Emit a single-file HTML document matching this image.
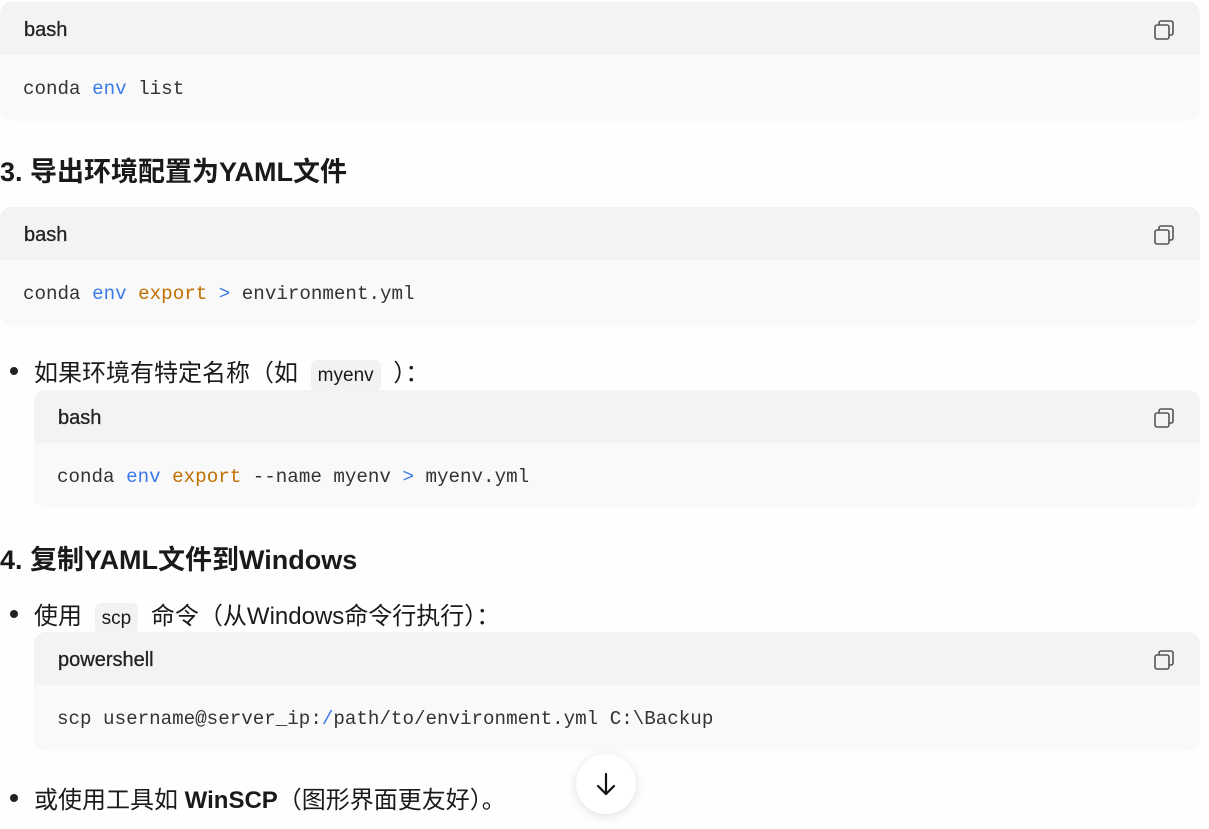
<!DOCTYPE html><html><head><meta charset="utf-8"><style>
body{margin:0;width:1209px;height:829px;background:#fefefe;position:relative;overflow:hidden;font-family:"Liberation Sans","Noto Sans CJK SC",sans-serif;color:#1a1a1a}
.blk{position:absolute;right:9px;border-radius:12px;background:#f9f9f9;overflow:hidden}
.hd{height:53px;background:#f3f3f3;position:relative}
.hd span{position:absolute;left:24px;top:17px;font-size:20px;color:#222;-webkit-text-stroke:0.3px #222}
.hd svg{position:absolute;right:25px;top:18px}
.cd{position:absolute;left:23px;font-family:"Liberation Mono",monospace;font-size:19.2px;color:#333;white-space:pre}
.b{color:#3b7ae8}.o{color:#c07000}
h3{position:absolute;left:0;margin:0;font-size:27px;font-weight:bold}
.li{position:absolute;left:10px;font-size:24px;white-space:pre}
.li:before{content:"";position:absolute;left:0;top:14px;width:8px;height:8px;border-radius:50%;background:#222}
.li span.t{margin-left:24px}
.ic{background:#f2f2f2;border-radius:6px;padding:5px 7px;font-size:19px;margin:0 6px}
</style></head><body>
<svg width="0" height="0" style="position:absolute"><defs><g id="cp"><rect x="1" y="5" width="14" height="14" rx="2" fill="none" stroke="#555" stroke-width="1.6"/><path d="M5 5V3a2 2 0 0 1 2-2h10a2 2 0 0 1 2 2v10a2 2 0 0 1-2 2h-2" fill="none" stroke="#555" stroke-width="1.6"/></g></defs></svg>
<div class="blk" style="left:0;top:2px;height:119px"><div class="hd"><span>bash</span><svg width="21" height="21"><use href="#cp"/></svg></div><div class="cd" style="top:76px">conda <span class="b">env</span> list</div></div>
<h3 style="top:150px">3. 导出环境配置为YAML文件</h3>
<div class="blk" style="left:0;top:207px;height:118px"><div class="hd"><span>bash</span><svg width="21" height="21"><use href="#cp"/></svg></div><div class="cd" style="top:76px">conda <span class="b">env</span> <span class="o">export</span> <span class="b">&gt;</span> environment.yml</div></div>
<div class="li" style="top:353px"><span class="t">如果环境有特定名称（如 <span class="ic">myenv</span> ）：</span></div>
<div class="blk" style="left:34px;top:390px;height:118px"><div class="hd"><span>bash</span><svg width="21" height="21"><use href="#cp"/></svg></div><div class="cd" style="top:76px">conda <span class="b">env</span> <span class="o">export</span> --name myenv <span class="b">&gt;</span> myenv.yml</div></div>
<h3 style="top:538px">4. 复制YAML文件到Windows</h3>
<div class="li" style="top:596px"><span class="t">使用 <span class="ic">scp</span> 命令（从Windows命令行执行）：</span></div>
<div class="blk" style="left:34px;top:632px;height:119px"><div class="hd"><span>powershell</span><svg width="21" height="21"><use href="#cp"/></svg></div><div class="cd" style="top:76px">scp username@server_ip:<span class="b">/</span>path/to/environment.yml C:\Backup</div></div>
<div class="li" style="top:780px"><span class="t">或使用工具如 <b>WinSCP</b>（图形界面更友好）。</span></div>
<div style="position:absolute;left:576px;top:754px;width:60px;height:60px;border-radius:50%;background:#fff;box-shadow:0 2px 10px rgba(0,0,0,.12)"><svg width="60" height="60"><path d="M30 20v20M22 32l8 8 8-8" fill="none" stroke="#111" stroke-width="2.2" stroke-linecap="round" stroke-linejoin="round"/></svg></div>
</body></html>
